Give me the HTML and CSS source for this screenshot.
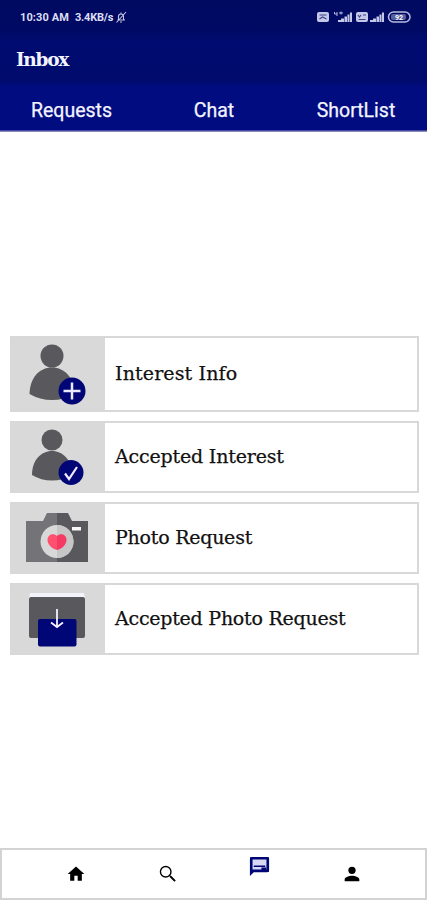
FILE: index.html
```html
<!DOCTYPE html>
<html lang="en">
<head>
<meta charset="utf-8">
<title>Inbox</title>
<link rel="stylesheet" href="styles.css">
</head>
<body>
<div class="app">
  <header class="top">
    <div class="status">
      <span class="clock">10:30 AM</span>
      <span class="speed">3.4KB/s</span>
      <svg class="bell" viewBox="0 0 11 12"><path d="M2 9h7.500M3 9V5.500a2.500 2.500 0 0 1 5 0V9M4.500 11h2M1 11.500L10.500 1M5.500 3V1.500" /></svg>
      <svg class="signals" viewBox="0 0 94 14">
        <rect x="0" y="2" width="12" height="10" rx="2"/>
        <path class="cut" d="M2.500 5h7M2.500 9l3-2 4 2"/>
        <path class="thin" d="M17.500 2v2h2.500M20 2v4M22 3h4M24 1.500v3"/>
        <path d="M21 12v-2h3v2zM24 12V8.500h3V12zM27.500 12V6.500H30V12zM30.500 12V4.500h2V12zM33 12V2.500H35V12z"/>
        <rect x="39" y="2" width="12" height="10" rx="2"/>
        <path class="cut" d="M41 5l1.500 2L44 5M46 5h3M41.500 9.500h7"/>
        <path d="M53 12v-2h3v2zM56 12V8.500h3V12zM59.500 12V6.500H62V12zM62.500 12V4.500h2V12zM65 12V2.500H67V12z"/>
        <rect class="battery" x="71.500" y="2" width="21.500" height="10" rx="5"/>
        <rect x="74" y="4" width="15" height="6" rx="2" opacity=".45"/>
        <text x="78" y="10">92</text>
      </svg>
    </div>
    <h1>Inbox</h1>
    <nav class="tabs"><a>Requests</a><a>Chat</a><a>ShortList</a></nav>
  </header>
  <main>
    <section class="row tall">
      <div class="pic"><svg viewBox="0 0 94 74">
        <g fill="#59595d"><circle cx="42" cy="19" r="11.500"/><path d="M19.500 57C20 41 29 30.500 42 30.500S64 41 64.500 57Q54 63 42 63T19.500 57z"/></g>
        <circle cx="62" cy="54" r="13.500" fill="#000675"/><path d="M62 45.500v17M53.500 54h17" stroke="#e8e8ff" stroke-width="2.500"/>
      </svg></div>
      <div class="label w1">Interest Info</div>
    </section>
    <section class="row">
      <div class="pic"><svg viewBox="0 0 94 70">
        <g fill="#59595d"><circle cx="42" cy="18" r="10.500"/><path d="M22 53C22 38 31 29 42 29s20 9 20 24Q53 58.500 42 58.500T22 53z"/></g>
        <circle cx="61" cy="50.500" r="12.500" fill="#000675"/><path d="M55 51.500l4 5.500 8-12" fill="none" stroke="#f1e9ff" stroke-width="2.200"/>
      </svg></div>
      <div class="label w2">Accepted Interest</div>
    </section>
    <section class="row">
      <div class="pic"><svg viewBox="0 0 94 70">
        <path fill="#737378" d="M16 18h17l4-8h10v49H16z"/><path fill="#59595d" d="M47 10h11l4 8h16v41H47z"/>
        <circle cx="47" cy="38.500" r="16.500" fill="#d8d8d8"/><path fill="#c6c6c6" d="M47 22a16.500 16.500 0 0 1 0 33z"/>
        <path fill="#ff5070" d="M47 33c-3-3-9.500-2-9.500 4 0 5 5 9 9.500 10z"/>
        <path fill="#f43a62" d="M47 33v14c4.500-1 9.500-5 9.500-10 0-6-6.500-7-9.500-4z"/>
        <path fill="#f8f8f8" d="M62 24h9v3.500h-9z"/>
      </svg></div>
      <div class="label w3">Photo Request</div>
    </section>
    <section class="row">
      <div class="pic"><svg viewBox="0 0 94 70">
        <path fill="#f3f3fa" d="M20 9h54l1 5H19z"/><rect x="19" y="13" width="56" height="41" rx="2" fill="#59595d"/>
        <rect x="28" y="35" width="38.500" height="27.500" rx="2" fill="#000675"/>
        <path d="M47 25v18M41 38.500l6 4.500 6-4.500" fill="none" stroke="#f2f2ff" stroke-width="1.800"/>
      </svg></div>
      <div class="label w4">Accepted Photo Request</div>
    </section>
  </main>
  <footer>
    <svg class="home" viewBox="0 0 24 24"><path d="M10 20v-6h4v6h5v-8h3L12 3 2 12h3v8z"/></svg>
    <svg class="search" viewBox="0 0 24 24"><path d="M15.500 14h-.79l-.28-.27A6.470 6.470 0 0 0 16 9.500 6.500 6.500 0 1 0 9.500 16c1.610 0 3.090-.59 4.230-1.570l.27.28v.79l5 4.990L20.490 19l-4.990-5zm-6 0.500a5 5 0 1 1 0-10 5 5 0 0 1 0 10z"/></svg>
    <svg class="active" viewBox="0 0 24 24"><path fill="#d8d8f4" d="M4 4h16v12H4z"/><path d="M20 2H4a2 2 0 0 0-2 2v18l4-4h14a2 2 0 0 0 2-2V4a2 2 0 0 0-2-2zm0 14H5.200L4 17.200V4h16z"/><path d="M3.500 3.500h17v13h-17z" fill="none" stroke="#000675" stroke-width="2.500"/><path d="M6 11h12v1.500H6zM14 13h5v3h-5z"/></svg>
    <svg class="person" viewBox="0 0 24 24"><path d="M12 12a4 4 0 1 0 0-8 4 4 0 0 0 0 8zm0 2c-2.670 0-8 1.340-8 4v2h16v-2c0-2.660-5.330-4-8-4z"/></svg>
  </footer>
</div>
</body>
</html>
```
FILE: styles.css
```css
* { box-sizing: border-box; }
body { margin: 0; background: #fff; }
.app { width: 427px; height: 900px; display: flex; flex-direction: column; overflow: hidden; }
.top {
  height: 132px;
  flex: none;
  color: #f4f4ff;
  background: linear-gradient(#000a60 0, #000a64 30px, #000b71 42px, #000b6d 80px, #000c80 88px, #000c80 130px, #8888bd 131px);
}
.status { height: 34px; display: flex; align-items: center; padding: 1px 16px 0 20px; font: bold 11px Roboto, sans-serif; color: #dedef4; white-space: nowrap; }
.clock { width: 55px; letter-spacing: .1px; }
.speed { width: 40px; letter-spacing: -.2px; }
.bell { width: 12px; height: 12px; margin-top: -1px; fill: none; stroke: #c4c4e4; stroke-width: 1.100; }
.signals { width: 94px; height: 14px; margin-left: auto; margin-top: -1px; fill: #c4c8e8; }
.signals .cut { fill: none; stroke: #3c4288; stroke-width: 1.200; }
.signals .thin { fill: none; stroke: #b8bce2; stroke-width: 1; }
.signals .battery { fill: none; stroke: #b8bce2; stroke-width: 1.500; }
.signals text { font: bold 7px Roboto, sans-serif; fill: #fff; }
h1 { height: 50px; margin: 0; padding-left: 16px; font: bold 18.500px/51px "DejaVu Serif", serif; letter-spacing: -1.300px; }
.tabs { display: grid; grid-template-columns: 143px 142px 142px; height: 46px; align-items: center; text-align: center; font: 19.500px/46px Roboto, sans-serif; padding-top: 4px; }
.tabs a { -webkit-text-stroke: .25px; }
main { flex: 1; display: flex; flex-direction: column; gap: 9px; padding: 204px 8px 0 10px; }
.row { height: 72px; display: flex; border: solid #d8d8d8; border-width: 2px 2px 2px 0; }
.row.tall { height: 76px; }
.pic { width: 95px; background: #d9d9d9; }
.pic svg { display: block; width: 94px; height: 70px; margin-top: -1px; }
.tall .pic svg { height: 74px; }
.label { display: flex; align-items: center; padding: 0 0 3px 10px; font: 19px "DejaVu Serif", serif; color: #111; white-space: nowrap; -webkit-text-stroke: .25px; }
.w1 { letter-spacing: .13px; }
.w2 { letter-spacing: -.18px; }
.w3 { letter-spacing: -.24px; }
.w4 { letter-spacing: -.24px; }
footer { height: 52px; border: 2px solid #d3d3d3; display: grid; grid-template-columns: repeat(4, 92px); justify-content: center; justify-items: center; align-items: center; }
footer svg { width: 20px; height: 20px; }
footer .search, footer .person { width: 22px; height: 22px; }
footer .active { width: 23px; height: 23px; fill: #000675; margin-bottom: 15px; }
```
